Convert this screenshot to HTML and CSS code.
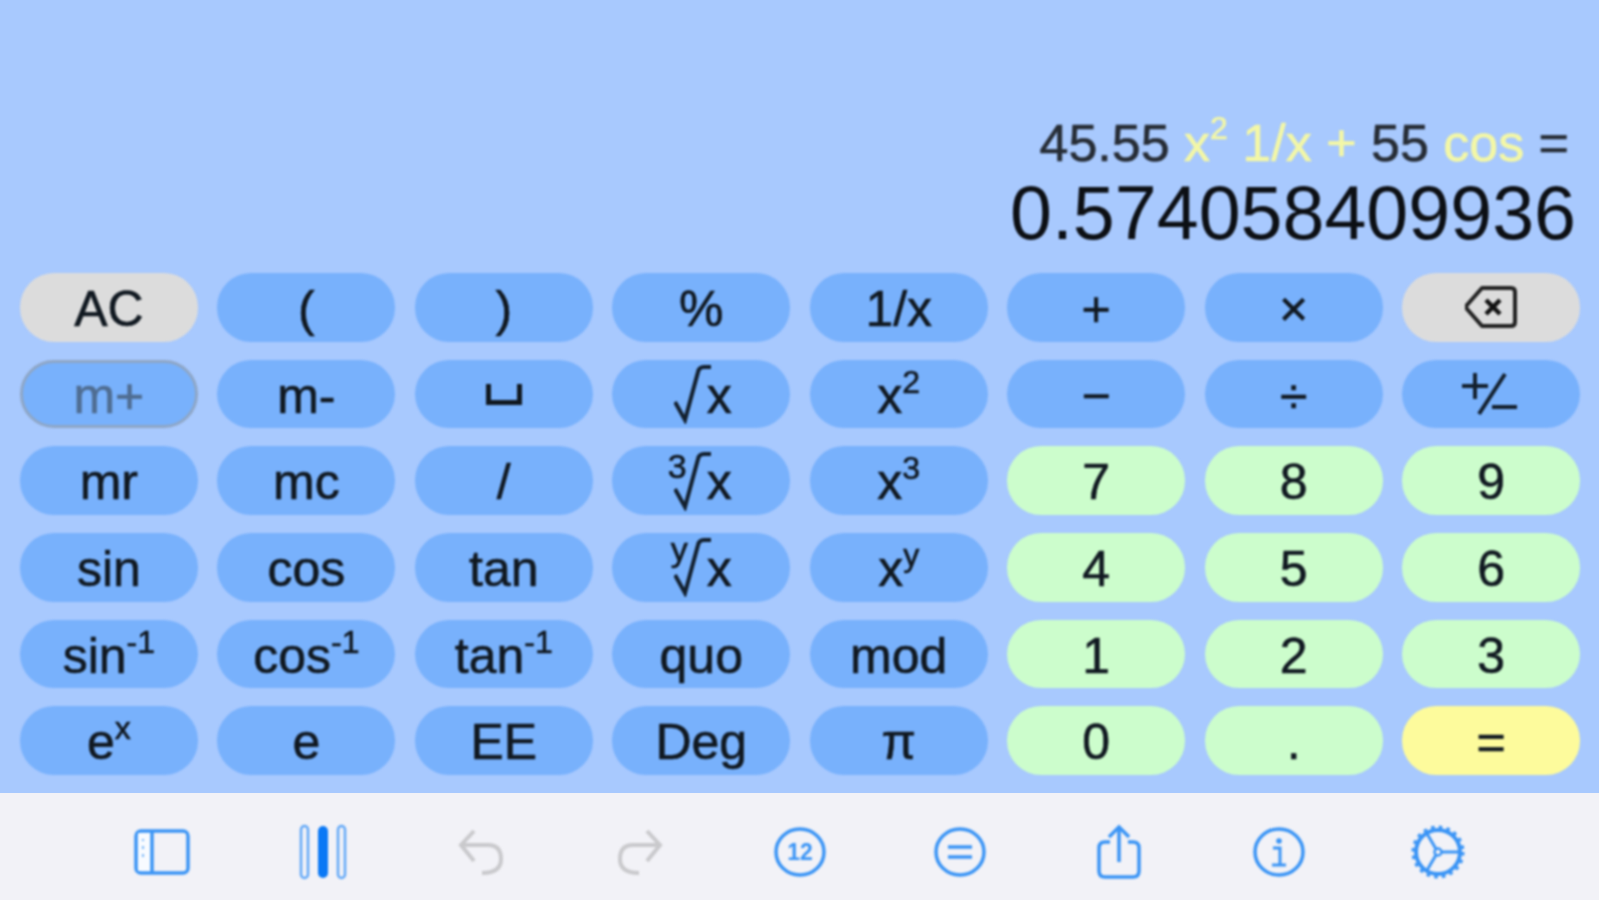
FILE: index.html
```html
<!DOCTYPE html>
<html lang="en">
<head>
    <meta charset="UTF-8">
    <meta name="viewport" content="width=device-width, initial-scale=1.0">
    <title>Calculator</title>
    <link rel="stylesheet" href="styles.css">
</head>
<body>
    <div class="calc">
        <div class="display">
            <div class="expr">45.55 <span class="op">x<sup>2</sup> 1/x +</span> 55 <span class="op">cos</span> =</div>
            <div class="result">0.574058409936</div>
        </div>

        <div class="keys">
            <button class="key grey">AC</button>
            <button class="key">(</button>
            <button class="key">)</button>
            <button class="key">%</button>
            <button class="key">1/x</button>
            <button class="key">+</button>
            <button class="key">×</button>
            <button class="key grey" aria-label="delete">
                <svg class="icon" viewBox="0 0 52 44" width="52" height="44">
                    <path d="M17 3H46Q50 3 50 7V37Q50 41 46 41H17L2 24Q0 22 2 20Z" fill="none" stroke="#222" stroke-width="4" stroke-linejoin="round"/>
                    <path d="M21 15L35 29M35 15L21 29" fill="none" stroke="#111" stroke-width="4.5"/>
                </svg>
            </button>

            <button class="key active">m+</button>
            <button class="key">m-</button>
            <button class="key" aria-label="space"><span class="space"></span></button>
            <button class="key">
                <span class="root">
                    <svg class="radical" viewBox="0 0 38 60" width="38" height="60"><path d="M1 38L11 56L24 8Q25 3 30 3H37" fill="none" stroke="#13202e" stroke-width="4"/></svg>x
                </span>
            </button>
            <button class="key"><span>x<sup>2</sup></span></button>
            <button class="key">−</button>
            <button class="key">÷</button>
            <button class="key" aria-label="plus minus">
                <svg class="icon plusminus" viewBox="0 0 56 44" width="56" height="44">
                    <path d="M1 14H27M14 1V27M18 42L44 2M31 35H56" fill="none" stroke="#13202e" stroke-width="4"/>
                </svg>
            </button>

            <button class="key">mr</button>
            <button class="key">mc</button>
            <button class="key">/</button>
            <button class="key">
                <span class="root">
                    <span class="index">3</span>
                    <svg class="radical" viewBox="0 0 38 60" width="38" height="60"><path d="M1 38L11 56L24 8Q25 3 30 3H37" fill="none" stroke="#13202e" stroke-width="4"/></svg>x
                </span>
            </button>
            <button class="key"><span>x<sup>3</sup></span></button>
            <button class="key num">7</button>
            <button class="key num">8</button>
            <button class="key num">9</button>

            <button class="key">sin</button>
            <button class="key">cos</button>
            <button class="key">tan</button>
            <button class="key">
                <span class="root">
                    <span class="index index-y">y</span>
                    <svg class="radical" viewBox="0 0 38 60" width="38" height="60"><path d="M1 38L11 56L24 8Q25 3 30 3H37" fill="none" stroke="#13202e" stroke-width="4"/></svg>x
                </span>
            </button>
            <button class="key"><span>x<sup>y</sup></span></button>
            <button class="key num">4</button>
            <button class="key num">5</button>
            <button class="key num">6</button>

            <button class="key"><span>sin<sup>-1</sup></span></button>
            <button class="key"><span>cos<sup>-1</sup></span></button>
            <button class="key"><span>tan<sup>-1</sup></span></button>
            <button class="key">quo</button>
            <button class="key">mod</button>
            <button class="key num">1</button>
            <button class="key num">2</button>
            <button class="key num">3</button>

            <button class="key"><span>e<sup>x</sup></span></button>
            <button class="key">e</button>
            <button class="key">EE</button>
            <button class="key">Deg</button>
            <button class="key">π</button>
            <button class="key num">0</button>
            <button class="key num">.</button>
            <button class="key equals">=</button>
        </div>

        <div class="toolbar">
            <svg viewBox="0 0 56 46" width="56" height="46">
                <rect x="2" y="2" width="52" height="42" rx="5" fill="none" stroke="#3a94f5" stroke-width="3.5"/>
                <rect x="4" y="4" width="13" height="38" fill="#f8fbff"/>
                <path d="M18 3V43" stroke="#3a94f5" stroke-width="3.5"/>
                <path d="M9 10V12M9 17V20M9 25V28" stroke="#7db8f8" stroke-width="2"/>
            </svg>
            <svg class="columns" viewBox="0 0 48 56" width="48" height="56">
                <rect x="2" y="2" width="7" height="52" rx="3.5" fill="none" stroke="#62a8f7" stroke-width="2.5"/>
                <rect x="19" y="2" width="10" height="52" rx="5" fill="#0a78f5"/>
                <rect x="39" y="2" width="7" height="52" rx="3.5" fill="none" stroke="#62a8f7" stroke-width="2.5"/>
            </svg>
            <svg viewBox="0 0 46 46" width="46" height="46">
                <path d="M16 2L3 16L16 32M3 16H30Q43 16 43 30Q43 44 24 44" fill="none" stroke="#c9c9cc" stroke-width="4"/>
            </svg>
            <svg viewBox="0 0 46 46" width="46" height="46">
                <path d="M30 2L43 16L30 32M43 16H16Q3 16 3 30Q3 44 22 44" fill="none" stroke="#c9c9cc" stroke-width="4"/>
            </svg>
            <svg viewBox="0 0 52 50" width="52" height="50">
                <ellipse cx="26" cy="25" rx="24" ry="23" fill="none" stroke="#3a94f5" stroke-width="3.5"/>
                <text x="26" y="33" class="icon-text">12</text>
            </svg>
            <svg viewBox="0 0 52 50" width="52" height="50">
                <ellipse cx="26" cy="25" rx="24" ry="23" fill="none" stroke="#3a94f5" stroke-width="3.5"/>
                <path d="M14 20H38M14 30H38" stroke="#3a94f5" stroke-width="3.5"/>
            </svg>
            <svg viewBox="0 0 44 56" width="44" height="56">
                <path d="M13 18H8Q2 18 2 24V47Q2 53 8 53H36Q42 53 42 47V24Q42 18 36 18H31" fill="none" stroke="#3a94f5" stroke-width="3.5"/>
                <path d="M22 38V4M12 13L22 3L32 13" fill="none" stroke="#3a94f5" stroke-width="3.5"/>
            </svg>
            <svg viewBox="0 0 52 50" width="52" height="50">
                <ellipse cx="26" cy="25" rx="24" ry="23" fill="none" stroke="#3a94f5" stroke-width="3.5"/>
                <circle cx="26" cy="14" r="2.8" fill="#3a94f5"/>
                <path d="M20 21H27V37M19 38H33" fill="none" stroke="#3a94f5" stroke-width="3"/>
            </svg>
            <svg viewBox="0 0 54 54" width="54" height="54">
                <circle cx="27" cy="27" r="22" fill="none" stroke="#3a94f5" stroke-width="4"/>
                <circle cx="27" cy="27" r="24.5" fill="none" stroke="#3a94f5" stroke-width="4" stroke-dasharray="3.5 4.2"/>
                <circle cx="27" cy="27" r="3.5" fill="none" stroke="#3a94f5" stroke-width="2.5"/>
                <path d="M30 27H50M25 24L15 7M25 30L15 47" stroke="#3a94f5" stroke-width="3"/>
            </svg>
        </div>
    </div>
</body>
</html>
```

FILE: styles.css
```css
* {
    box-sizing: border-box;
}

body {
    margin: 0;
    font-family: "Liberation Sans", Arial, sans-serif;
    background-color: #a8c9fe;
    color: #101820;
}

.calc {
    display: flex;
    flex-direction: column;
    height: 900px;
}

.display,
.keys,
.toolbar svg {
    filter: blur(1px);
}

.display {
    height: 273px;
    padding-right: 23px;
    display: flex;
    flex-direction: column;
    align-items: flex-end;
    justify-content: flex-end;
}

.expr {
    font-size: 52px;
    line-height: 60px;
    margin-bottom: 2px;
    padding-right: 7px;
    color: #262c35;
    white-space: pre;
    -webkit-text-stroke: 0.6px;
}

.expr .op {
    color: #f3f7a6;
}

.expr sup {
    font-size: 32px;
    line-height: 0;
    vertical-align: 22px;
}

.result {
    font-size: 75.4px;
    line-height: 76px;
    margin-bottom: 22px;
    color: #0c0f14;
}

.keys {
    display: grid;
    grid-template-columns: repeat(8, 1fr);
    grid-auto-rows: 68.7px;
    column-gap: 19.7px;
    row-gap: 18px;
    padding: 0 19px 0 20px;
}

.key {
    display: flex;
    align-items: center;
    justify-content: center;
    padding: 3px 0 0;
    border: none;
    border-radius: 34px;
    background-color: #78b1fc;
    color: #101820;
    font-family: inherit;
    font-size: 50px;
    line-height: 1;
    -webkit-text-stroke: 0.6px;
}

.key sup {
    font-size: 32px;
    line-height: 0;
    vertical-align: 20px;
}

.grey {
    background-color: #dcdcdc;
}

.num {
    background-color: #ccfdcc;
}

.equals {
    background-color: #fdfb9c;
}

.active {
    border: 3px solid #8ea6c6;
    color: #4f6d92;
}

.icon {
    margin-top: -3px;
}

.plusminus {
    margin-right: 5px;
}

.space {
    display: block;
    width: 36px;
    height: 21px;
    margin-top: -3px;
    border: solid #101820;
    border-width: 0 5px 5px;
}

.root {
    position: relative;
    display: flex;
    align-items: center;
    margin-left: 3px;
}

.radical {
    margin-right: -5px;
    margin-top: -3px;
}

.index {
    position: absolute;
    left: -6px;
    top: -5px;
    font-size: 34px;
    line-height: 1;
}

.index-y {
    top: -8px;
    left: -3px;
}

.toolbar {
    flex: 1;
    margin-top: 18px;
    padding: 10px 81px 0 82px;
    background-color: #f2f2f7;
    display: grid;
    grid-template-columns: repeat(9, 1fr);
    align-items: center;
    justify-items: center;
}

.columns {
    margin-left: 4px;
}

.icon-text {
    font-size: 23px;
    font-weight: bold;
    fill: #3a94f5;
    text-anchor: middle;
}
```
